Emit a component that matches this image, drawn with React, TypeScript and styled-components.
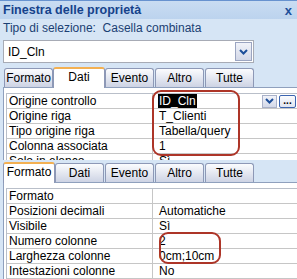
import React from 'react'
import styled, {createGlobalStyle} from 'styled-components'

const Global = createGlobalStyle`
  body{
    margin:0;
    background:#d6e5f5;
  }
`
const Window = styled.div`
  position:relative;
  width:297px;
  height:279px;
  overflow:hidden;
  background:#d6e5f5;
  font-family:"Liberation Sans", Arial, sans-serif;
  font-size:12px;
  color:#000;
`
const TitleBar = styled.div`
  height:18px;
  border-top:1px solid #6792cf;
  background:linear-gradient(#c9dcf2,#bcd3ee);
  display:flex;
  align-items:center;
  justify-content:space-between;
  padding:0 5px 0 3px;
  color:#15428b;
  font-weight:bold;
  font-size:12.5px;
`
const Close = styled.span`
  font-size:13px;
  font-weight:bold;
  color:#1d4f9a;
`
const SelType = styled.div`
  height:17px;
  padding-left:3px;
  display:flex;
  align-items:center;
  color:#1b3f73;
  white-space:pre;
`
const Combo = styled.div`
  box-sizing:border-box;
  margin:4px 0 0 3px;
  width:251px;
  height:23px;
  border:1px solid #a7abb5;
  background:#fff;
  display:flex;
  align-items:center;
  justify-content:space-between;
  padding:0 1px 0 4px;
`
const DropButton = styled.div<{$focus?:boolean}>`
  box-sizing:border-box;
  width:${p=>p.$focus?'17px':'15px'};
  height:${p=>p.$focus?'19px':'13px'};
  border:1px solid ${p=>p.$focus?'#9ba5c1':'#a9b1c9'};
  background:linear-gradient(#f1f3f9,#d3d8e8);
  display:flex;
  align-items:center;
  justify-content:center;
`
const DotsButton = styled.div`
  box-sizing:border-box;
  width:17px;
  height:13px;
  border:1px solid #3b64b0;
  border-radius:2px;
  background:linear-gradient(#fbfcfe,#dfe4f0);
  display:flex;
  align-items:center;
  justify-content:center;
  font-weight:bold;
  font-size:10px;
  line-height:1;
  color:#000;
`
const Sheet = styled.div<{$height:number}>`
  height:${p=>p.$height}px;
  overflow:hidden;
  display:flex;
  flex-direction:column;
`
const TabRow = styled.div`
  height:22px;
  flex:none;
  display:flex;
  align-items:flex-end;
  padding-left:4px;
  gap:1px;
`
const Tab = styled.div<{$active?:boolean;$w:number}>`
  box-sizing:border-box;
  width:${p=>p.$w}px;
  height:${p=>p.$active?'21px':'19px'};
  margin:${p=>p.$active?'0 -1px -1px -1px':'0'};
  border:1px solid #8d98b6;
  border-bottom:none;
  border-top:${p=>p.$active?'2px solid #f3b052':'1px solid #8d98b6'};
  border-radius:3px 3px 0 0;
  background:${p=>p.$active?'#fff':'linear-gradient(#fbfcfe,#cdd3e4)'};
  display:flex;
  align-items:center;
  justify-content:center;
  padding-bottom:${p=>p.$active?'3px':'0'};
  position:relative;
  z-index:${p=>p.$active?1:0};
`
const Panel = styled.div`
  flex:1;
  background:#fff;
  border:1px solid #8fa0bd;
  border-right:none;
  border-bottom:none;
  margin-left:3px;
  padding:5px 0 0 2px;
`
const Grid = styled.div`
  border-top:1px solid #b9bfc9;
  border-left:1px solid #b9bfc9;
`
const Row = styled.div`
  box-sizing:border-box;
  display:grid;
  grid-template-columns:146px 1fr;
  height:15px;
  border-bottom:1px solid #c6c6c6;
`
const Label = styled.div`
  border-right:1px solid #c6c6c6;
  padding-left:2px;
  display:flex;
  align-items:center;
  white-space:nowrap;
  overflow:hidden;
`
const Value = styled.div`
  padding-left:6px;
  display:flex;
  align-items:center;
  white-space:nowrap;
`
const Selected = styled.span`
  background:#000;
  color:#fff;
  padding:0 1px;
  margin-left:-1px;
`
const Buttons = styled.div`
  margin-left:auto;
  display:flex;
  gap:2px;
  padding-right:1px;
`
const Note = styled.div<{$x:number;$y:number;$w:number;$h:number}>`
  position:absolute;
  left:${p=>p.$x}px;
  top:${p=>p.$y}px;
  width:${p=>p.$w}px;
  height:${p=>p.$h}px;
  box-sizing:border-box;
  border:2px solid #ad3528;
  border-radius:9px;
  pointer-events:none;
`

const Chevron = () => (
  <svg width="9" height="6" viewBox="0 0 9 6">
    <path d="M1 1 L4.5 4.5 L8 1" fill="none" stroke="#1d4f9a" strokeWidth="2"/>
  </svg>
)

const tabs = ['Formato','Dati','Evento','Altro','Tutte']

type Prop = {label:string, value:React.ReactNode}

function PropertySheet({active,rows,height}:{active:string,rows:Prop[],height:number}) {
  return (
    <Sheet $height={height}>
      <TabRow>
        {tabs.map(t=><Tab key={t} $active={t===active} $w={t===active?52:49}>{t}</Tab>)}
      </TabRow>
      <Panel>
        <Grid>
          {rows.map(r=>(
            <Row key={r.label}>
              <Label>{r.label}</Label>
              <Value>{r.value}</Value>
            </Row>
          ))}
        </Grid>
      </Panel>
    </Sheet>
  )
}

export default function App() {
  const dataRows:Prop[] = [
    {label:'Origine controllo',value:<>
      <Selected>ID_Cln</Selected>
      <Buttons>
        <DropButton><Chevron/></DropButton>
        <DotsButton>...</DotsButton>
      </Buttons>
    </>},
    {label:'Origine riga',value:'T_Clienti'},
    {label:'Tipo origine riga',value:'Tabella/query'},
    {label:'Colonna associata',value:'1'},
    {label:'Solo in elenco',value:'Sì'},
  ]
  const formatRows:Prop[] = [
    {label:'Formato',value:''},
    {label:'Posizioni decimali',value:'Automatiche'},
    {label:'Visibile',value:'Sì'},
    {label:'Numero colonne',value:'2'},
    {label:'Larghezza colonne',value:'0cm;10cm'},
    {label:'Intestazioni colonne',value:'No'},
  ]
  return (
    <Window>
      <Global/>
      <TitleBar>
        <span>Finestra delle proprietà</span>
        <Close>x</Close>
      </TitleBar>
      <SelType>{'Tipo di selezione:  Casella combinata'}</SelType>
      <Combo>
        <span>ID_Cln</span>
        <DropButton $focus><Chevron/></DropButton>
      </Combo>
      <div style={{height:2}}/>
      <PropertySheet active="Dati" rows={dataRows} height={95}/>
      <PropertySheet active="Formato" rows={formatRows} height={119}/>
      <Note $x={152} $y={90} $w={88} $h={66}/>
      <Note $x={159} $y={232} $w={62} $h={32}/>
    </Window>
  )
}
